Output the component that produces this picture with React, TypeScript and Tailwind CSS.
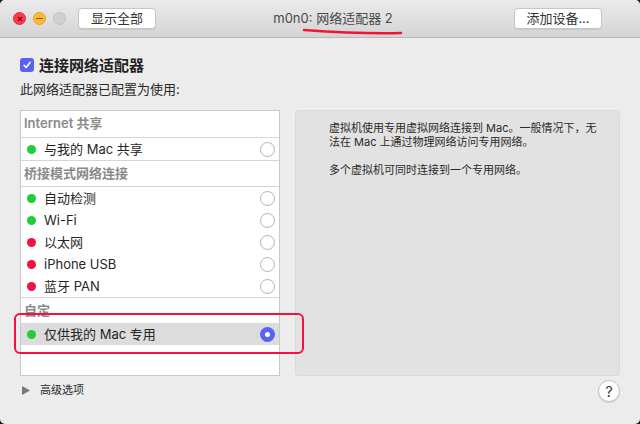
import React from "react";

const font = { fontFamily: '"Inter", "Noto Sans CJK SC", sans-serif' };

function Dot({ c }: { c: "g" | "r" }) {
  return (
    <span
      className={
        "w-[9px] h-[9px] rounded-full shrink-0 " +
        (c === "g" ? "bg-[#22cc3a]" : "bg-[#f5103f]")
      }
    />
  );
}

function Radio({ on }: { on?: boolean }) {
  if (on)
    return (
      <span className="w-[15px] h-[15px] rounded-full bg-[#5a62f6] flex items-center justify-center shrink-0">
        <span className="w-[5px] h-[5px] rounded-full bg-white" />
      </span>
    );
  return <span className="w-[15px] h-[15px] rounded-full border border-[#b3b3b3] bg-white shrink-0" />;
}

function Row({ c, label, on }: { c: "g" | "r"; label: string; on?: boolean }) {
  return (
    <div className={"h-[22px] shrink-0 flex items-center pl-[6px] pr-[4px] " + (on ? "bg-[#dcdcdc]" : "")}>
      <Dot c={c} />
      <span className="ml-[8px] text-[13px] text-[#262626] flex-1 leading-none">{label}</span>
      <Radio on={on} />
    </div>
  );
}

function Header({ label, top }: { label: string; top?: boolean }) {
  return (
    <div
      className={
        "shrink-0 flex items-center pl-[3px] text-[13px] font-semibold text-[#8a8a8a] " +
        (top ? "h-[26px]" : "h-[26px] border-t border-[#d6d6d6]")
      }
    >
      {label}
    </div>
  );
}

export default function App() {
  return (
    <div className="w-[640px] h-[424px] bg-[#151515] overflow-hidden" style={font}>
      <div className="w-[640px] h-[424px] bg-[#ececec] rounded-[5px] flex flex-col relative overflow-hidden">
        {/* title bar */}
        <div className="h-[38px] shrink-0 bg-gradient-to-b from-[#ebebeb] to-[#d4d4d4] border-b border-[#b9b9b9] flex items-center relative">
          <div className="flex items-center gap-[7px] ml-[13px]">
            <span className="w-[13px] h-[13px] rounded-full bg-[#fc3a4d] border border-[#de2b3c] flex items-center justify-center">
              <svg width="6" height="6" viewBox="0 0 6 6">
                <path d="M1 1L5 5M5 1L1 5" stroke="#8b0c16" strokeWidth="1.4" />
              </svg>
            </span>
            <span className="w-[13px] h-[13px] rounded-full bg-[#fdbb2d] border border-[#dea123] flex items-center justify-center">
              <span className="w-[7px] h-[1.5px] bg-[#995700]" />
            </span>
            <span className="w-[13px] h-[13px] rounded-full bg-[#d0d0d0] border border-[#c0c0c0]" />
          </div>
          <div className="ml-[12px] w-[78px] h-[21px] bg-white border border-[#c6c6c6] rounded-[4px] shadow-[0_1px_0_rgba(0,0,0,0.08)] flex items-center justify-center text-[13px] text-[#333]">
            显示全部
          </div>
          <div className="absolute left-0 right-0 top-0 h-[38px] flex items-center justify-center pointer-events-none">
            <span className="text-[13px] text-[#4a4a4a] ml-[26px]">m0n0: 网络适配器 2</span>
          </div>
          <div className="ml-auto mr-[38px] w-[88px] h-[21px] bg-white border border-[#c6c6c6] rounded-[4px] shadow-[0_1px_0_rgba(0,0,0,0.08)] flex items-center justify-center text-[13px] text-[#333]">
            添加设备...
          </div>
          <svg className="absolute left-[302px] top-[27px]" width="102" height="10" viewBox="0 0 102 10">
            <path d="M2 3 C30 5, 60 7, 99 6" stroke="#f01535" strokeWidth="2.4" fill="none" strokeLinecap="round" />
          </svg>
        </div>

        {/* body */}
        <div className="flex-1 flex flex-col px-[20px]">
          <div className="flex items-center mt-[19px] h-[16px]">
            <span className="w-[14px] h-[14px] rounded-[3px] bg-[#5a62f6] flex items-center justify-center">
              <svg width="10" height="10" viewBox="0 0 10 10">
                <path d="M2 5.2L4.2 7.5L8.2 2.3" stroke="white" strokeWidth="1.5" fill="none" strokeLinecap="round" strokeLinejoin="round" />
              </svg>
            </span>
            <span className="ml-[5px] text-[15px] font-semibold text-[#222] leading-none">连接网络适配器</span>
          </div>
          <div className="mt-[10px] text-[13px] text-[#2a2a2a] leading-none h-[14px]">此网络适配器已配置为使用:</div>

          <div className="mt-[13px] flex gap-[15px] h-[266px]">
            <div className="w-[260px] bg-white border border-[#c9c9c9] flex flex-col">
              <Header label="Internet 共享" top />
              <div className="border-t border-[#d6d6d6]" />
              <Row c="g" label="与我的 Mac 共享" />
              <Header label="桥接模式网络连接" />
              <div className="border-t border-[#d6d6d6]" />
              <Row c="g" label="自动检测" />
              <Row c="g" label="Wi-Fi" />
              <Row c="r" label="以太网" />
              <Row c="r" label="iPhone USB" />
              <Row c="r" label="蓝牙 PAN" />
              <Header label="自定" />
              <Row c="g" label="仅供我的 Mac 专用" on />
            </div>
            <div className="w-[325px] bg-[#e2e2e2] rounded-[3px] border border-[#dadada] pl-[33px] pt-[10px] text-[11px] leading-[14px] text-[#2a2a2a]">
              <p>虚拟机使用专用虚拟网络连接到 Mac。一般情况下，无</p>
              <p>法在 Mac 上通过物理网络访问专用网络。</p>
              <p className="mt-[14px]">多个虚拟机可同时连接到一个专用网络。</p>
            </div>
          </div>

          <div className="flex items-center mt-[4px] h-[22px]">
            <svg width="8" height="9" viewBox="0 0 8 9" className="ml-[2px] -mt-[2px]">
              <path d="M0 0L8 4.5L0 9Z" fill="#7a7a7a" />
            </svg>
            <span className="ml-[10px] text-[11px] text-[#2a2a2a] -mt-[2px]">高级选项</span>
            <span className="ml-auto w-[22px] h-[22px] rounded-full bg-white border border-[#c4c4c4] shadow-[0_1px_1px_rgba(0,0,0,0.12)] flex items-center justify-center text-[14px] text-[#333]">
              ?
            </span>
          </div>
        </div>

        {/* red annotation box */}
        <div className="absolute left-[14px] top-[313px] w-[290px] h-[41px] border-[2.5px] border-[#f5103f] rounded-[6px] pointer-events-none" />
      </div>
    </div>
  );
}
